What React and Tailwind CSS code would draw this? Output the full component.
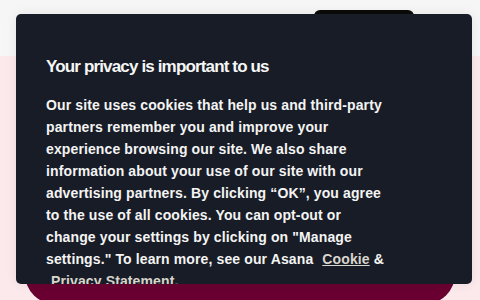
export default function App() {
  return (
    <div className="relative w-[480px] h-[300px] overflow-hidden flex flex-col bg-[#fbe9eb] font-['Liberation_Sans',Arial,sans-serif]">
      <div className="h-[56px] bg-[#f6f6f6] flex justify-end pr-[66px] pt-[10px]">
        <div className="w-[100px] h-[30px] rounded-md bg-[#0b0b0c]" />
      </div>
      <div className="flex-1 flex flex-col justify-end px-[25px]">
        <div className="h-[40px] -mb-[4px] rounded-b-[30px] bg-[#690031]" />
      </div>

      <div className="absolute left-[16px] top-[14px] w-[456px] h-[270px] rounded-[5px] bg-[#181c26] overflow-hidden pl-[30px] pt-[41px] shadow-[0_0_12px_rgba(0,0,0,0.08)]">
        <h2 className="text-[17px] leading-[24px] font-bold tracking-[-0.85px] text-[#f6f6f6]">
          Your privacy is important to us
        </h2>
        <p className="mt-[15px] w-[340px] text-[14px] leading-[22px] font-bold tracking-[0.12px] text-[#f4f4f4]">
          Our site uses cookies that help us and third-party partners remember you and improve your experience browsing our site. We also share information about your use of our site with our advertising partners. By clicking “OK”, you agree to the use of all cookies. You can opt-out or change your settings by clicking on "Manage settings." To learn more, see our Asana{" "}
          <a className="ml-[5px] underline text-[#d8d5cd]">Cookie</a> &amp;{" "}
          <a className="ml-[5px] underline text-[#d8d5cd]">Privacy Statement</a>.
        </p>
      </div>
    </div>
  );
}
